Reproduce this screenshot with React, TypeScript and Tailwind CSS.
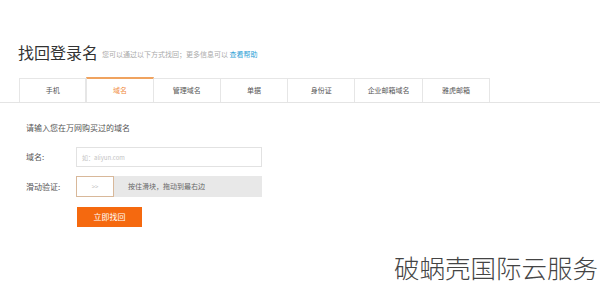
const tabs = ["手机", "域名", "管理域名", "单据", "身份证", "企业邮箱域名", "雅虎邮箱"];

export default function App() {
  return (
    <div
      className="w-[600px] h-[284px] bg-white relative overflow-hidden"
      style={{ fontFamily: '"Noto Sans CJK SC", "Noto Sans", sans-serif' }}
    >
      {/* 标题 */}
      <div className="flex items-end pt-[42px] pl-[18px]">
        <h1 className="text-[16px] leading-[20px] text-[#333] font-normal">找回登录名</h1>
        <p className="ml-[4px] mb-[3px] text-[7px] leading-[9px] text-[#aaa]">
          您可以通过以下方式找回；更多信息可以 <span className="text-[#2d9fd6]">查看帮助</span>
        </p>
      </div>

      {/* 选项卡 */}
      <div className="mt-[15px] border-b border-[#e4e4e4] flex pl-[19px]">
        {tabs.map((t, i) =>
          i === 1 ? (
            <div
              key={t}
              className="w-[67.3px] h-[25px] -mb-px bg-white border-t-2 border-[#f0a35f] border-x border-x-[#e6e6e6] flex items-center justify-center text-[7px] text-[#f08a3c]"
            >
              {t}
            </div>
          ) : (
            <div
              key={t}
              className="w-[67.3px] h-[24px] mt-px border-t border-r border-[#e6e6e6] first:border-l flex items-center justify-center text-[7px] text-[#555]"
            >
              {t}
            </div>
          )
        )}
      </div>

      {/* 表单 */}
      <div className="pl-[26px] pt-[20px]">
        <p className="text-[8px] leading-[10px] text-[#555]">请输入您在万网购买过的域名</p>

        <div className="mt-[14px] flex items-center">
          <span className="w-[50px] text-[8px] text-[#555]">域名:</span>
          <div className="w-[186px] h-[20px] border border-[#e2e2e2] flex items-center px-[5px] text-[6px] text-[#c4c4c4]">
            如：aliyun.com
          </div>
        </div>

        <div className="mt-[9px] flex items-center">
          <span className="w-[50px] text-[8px] text-[#555]">滑动验证:</span>
          <div className="w-[186px] h-[21px] bg-[#e8e8e8] flex items-center">
            <div className="w-[38px] h-[21px] bg-white border border-[#d8b89a] flex items-center justify-center text-[6px] text-[#bbb]">
              &gt;&gt;
            </div>
            <span className="ml-[14px] text-[7px] text-[#666]">按住滑块，拖动到最右边</span>
          </div>
        </div>

        <button className="ml-[51px] mt-[10px] w-[65px] h-[20px] bg-[#f5690f] text-white text-[8px] flex items-center justify-center">
          立即找回
        </button>
      </div>

      {/* 水印 */}
      <div className="absolute right-[2px] bottom-[3px] text-[25.5px] leading-[28px] text-[#444] font-light">
        破蜗壳国际云服务
      </div>
    </div>
  );
}
